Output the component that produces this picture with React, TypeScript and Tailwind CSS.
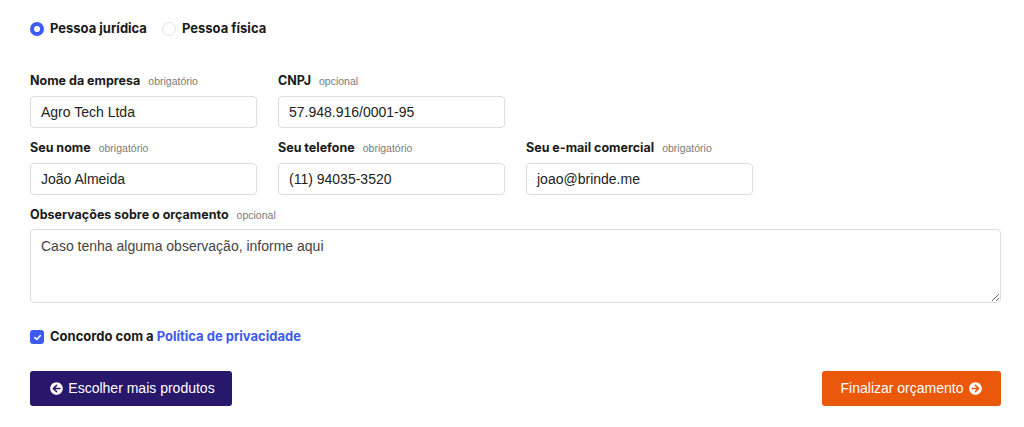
import React from "react";
import { FaArrowCircleLeft, FaArrowCircleRight } from "react-icons/fa";

const sans = { fontFamily: "'Liberation Sans', Arial, sans-serif" };

function Label({ title, hint }: { title: string; hint: string }) {
  return (
    <div className="flex items-baseline gap-[8px] h-4 leading-4">
      <span className="text-[12.5px] font-bold text-[#1a1a1a]" style={{ fontFamily: "Inter, sans-serif" }}>{title}</span>
      <span className="text-[10.5px] text-[#7a7a7a]" style={sans}>{hint}</span>
    </div>
  );
}

function Field({ title, hint, value }: { title: string; hint: string; value: string }) {
  return (
    <div className="flex flex-col w-[227px]">
      <Label title={title} hint={hint} />
      <div className="mt-[7px] h-8 border border-[#dcdcdc] rounded-[4px] flex items-center px-[10px] text-[14px] text-[#222]" style={sans}>
        {value}
      </div>
    </div>
  );
}

export default function App() {
  return (
    <div className="w-[1024px] h-[427px] bg-white pl-[30px] pr-[23px] pt-[22px] overflow-hidden">
      <div className="flex items-center h-[14px]" style={{ fontFamily: "Inter, sans-serif" }}>
        <span className="w-[14px] h-[14px] rounded-full border-[4px] border-[#3d5af1] bg-white" />
        <span className="ml-[6px] text-[13px] font-bold text-[#1a1a1a]">Pessoa jurídica</span>
        <span className="ml-[15px] w-[14px] h-[14px] rounded-full border border-[#e2e2e2] bg-white" />
        <span className="ml-[6px] text-[13px] font-bold text-[#1a1a1a]">Pessoa física</span>
      </div>

      <div className="mt-[37px] flex gap-[21px]">
        <Field title="Nome da empresa" hint="obrigatório" value="Agro Tech Ltda" />
        <Field title="CNPJ" hint="opcional" value="57.948.916/0001-95" />
      </div>
      <div className="mt-[12px] flex gap-[21px]">
        <Field title="Seu nome" hint="obrigatório" value="João Almeida" />
        <Field title="Seu telefone" hint="obrigatório" value="(11) 94035-3520" />
        <Field title="Seu e-mail comercial" hint="obrigatório" value="joao@brinde.me" />
      </div>
      <div className="mt-[12px] flex flex-col">
        <Label title="Observações sobre o orçamento" hint="opcional" />
        <textarea
          className="mt-[6px] w-full h-[74px] border border-[#dcdcdc] rounded-[4px] px-[10px] py-[6px] text-[14px] text-[#444] placeholder:text-[#444] outline-none"
          style={sans}
          placeholder="Caso tenha alguma observação, informe aqui"
        />
      </div>

      <div className="mt-[27px] flex items-center h-[14px]" style={{ fontFamily: "Inter, sans-serif" }}>
        <span className="w-[14px] h-[14px] rounded-[3px] bg-[#3d5af1] flex items-center justify-center">
          <svg width="9" height="9" viewBox="0 0 10 10" fill="none">
            <path d="M2 5.2 L4.2 7.2 L8 3" stroke="white" strokeWidth="1.8" strokeLinecap="round" strokeLinejoin="round" />
          </svg>
        </span>
        <span className="ml-[6px] text-[13px] font-bold text-[#1a1a1a]">
          Concordo com a <span className="text-[#3d5af1]">Política de privacidade</span>
        </span>
      </div>

      <div className="mt-[27px] flex justify-between">
        <button className="h-[35px] w-[202px] rounded-[3px] bg-[#28186b] text-white text-[14px] flex items-center justify-center gap-[5px] pl-[3px]" style={sans}>
          <FaArrowCircleLeft className="w-[13px] h-[13px]" />
          Escolher mais produtos
        </button>
        <button className="h-[35px] w-[179px] rounded-[3px] bg-[#ea580c] text-white text-[14px] flex items-center justify-center gap-[6px]" style={sans}>
          Finalizar orçamento
          <FaArrowCircleRight className="w-[13px] h-[13px]" />
        </button>
      </div>
    </div>
  );
}
